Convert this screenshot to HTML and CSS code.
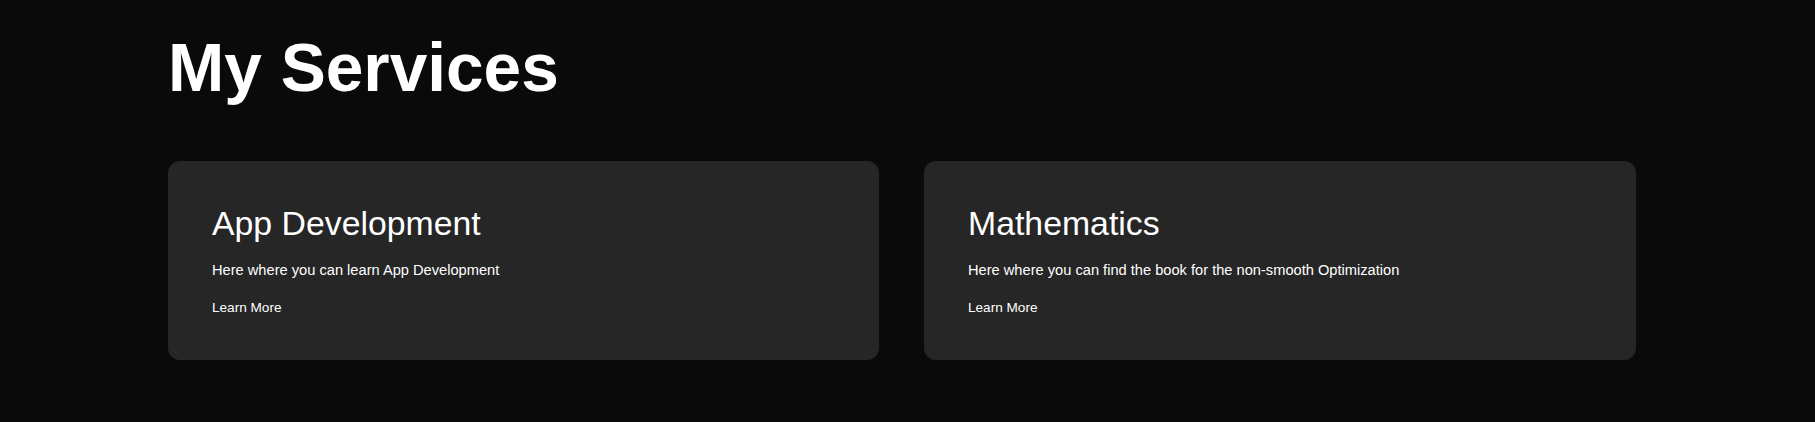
FILE: index.html
```html
<!DOCTYPE html>
<html lang="en">
<head>
<meta charset="utf-8">
<title>My Services</title>
<link rel="stylesheet" href="styles.css">
</head>
<body>
<section class="services">
  <h1 class="services-title">My Services</h1>
  <div class="services-grid">
    <div class="service-card">
      <h2 class="card-title">App Development</h2>
      <p class="card-text">Here where you can learn App Development</p>
      <a class="card-link" href="#">Learn More</a>
    </div>
    <div class="service-card">
      <h2 class="card-title">Mathematics</h2>
      <p class="card-text">Here where you can find the book for the non-smooth Optimization</p>
      <a class="card-link" href="#">Learn More</a>
    </div>
  </div>
</section>
</body>
</html>
```
FILE: styles.css
```css
html, body {
  margin: 0;
  padding: 0;
  background: #0a0a0a;
  color: #ffffff;
  font-family: "Liberation Sans", Arial, sans-serif;
}

.services {
  padding: 29px 0 0 168px;
  width: 1468px;
}

.services-title {
  margin: 0 0 55px 0;
  font-size: 67.6px;
  line-height: 77px;
  font-weight: 700;
}

.services-grid {
  display: grid;
  grid-template-columns: 711px 712px;
  gap: 45px;
}

.service-card {
  background: #262626;
  border-radius: 12px;
  padding: 43px 44px 45px 44px;
  height: 199px;
  box-sizing: border-box;
  display: flex;
  flex-direction: column;
  align-items: flex-start;
}

.card-title {
  margin: 0;
  font-size: 33.8px;
  line-height: 38px;
  font-weight: 400;
}

.card-text {
  margin: 20px 0 0 0;
  font-size: 14.65px;
  line-height: 16px;
}

.card-link {
  margin-top: 22px;
  font-size: 13.6px;
  line-height: 15px;
  color: #ffffff;
  text-decoration: none;
}
```
